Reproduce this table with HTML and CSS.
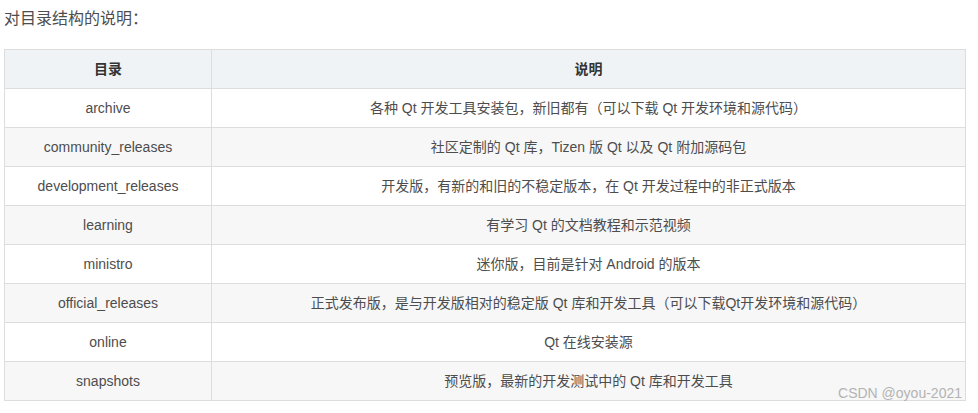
FILE: index.html
```html
<!DOCTYPE html>
<html lang="zh">
<head>
<meta charset="utf-8">
<link rel="stylesheet" href="styles.css">
</head>
<body>
<div class="page">
  <p class="title">对目录结构的说明：</p>
  <div class="table-wrap">
    <table class="dirs">
      <thead>
        <tr><th class="c1">目录</th><th>说明</th></tr>
      </thead>
      <tbody>
        <tr><td>archive</td><td>各种 Qt 开发工具安装包，新旧都有（可以下载 Qt 开发环境和源代码）</td></tr>
        <tr><td>community_releases</td><td>社区定制的 Qt 库，Tizen 版 Qt 以及 Qt 附加源码包</td></tr>
        <tr><td>development_releases</td><td>开发版，有新的和旧的不稳定版本，在 Qt 开发过程中的非正式版本</td></tr>
        <tr><td>learning</td><td>有学习 Qt 的文档教程和示范视频</td></tr>
        <tr><td>ministro</td><td>迷你版，目前是针对 Android 的版本</td></tr>
        <tr><td>official_releases</td><td>正式发布版，是与开发版相对的稳定版 Qt 库和开发工具（可以下载Qt开发环境和源代码）</td></tr>
        <tr><td>online</td><td>Qt 在线安装源</td></tr>
        <tr><td>snapshots</td><td>预览版，最新的开发测试中的 Qt 库和开发工具</td></tr>
      </tbody>
    </table>
    <span class="watermark">CSDN @oyou-2021</span>
  </div>
</div>
</body>
</html>
```

FILE: styles.css
```css
html, body {
  margin: 0;
  padding: 0;
  background: #fff;
}
body {
  font-family: "Liberation Sans", "Noto Sans CJK SC", sans-serif;
  color: #4d4d4d;
}
.page {
  padding: 6px 12px 0 4px;
}
.title {
  margin: 0 0 17px 0;
  font-size: 16px;
  line-height: 26px;
  color: #4d4d4d;
}
.table-wrap {
  position: relative;
  width: 962px;
}
.dirs {
  width: 962px;
  border-collapse: collapse;
  table-layout: fixed;
  font-size: 14px;
}
.dirs th, .dirs td {
  border: 1px solid #ddd;
  padding: 8px 8px;
  line-height: 22px;
  text-align: center;
  white-space: nowrap;
}
.dirs .c1 {
  width: 190px;
}
.dirs th {
  background: #eff3f5;
  font-weight: bold;
  color: #333;
}
.dirs tbody tr:nth-child(even) td {
  background: #f7f7f7;
}
.watermark {
  position: absolute;
  right: 4px;
  bottom: 0;
  font-size: 14px;
  line-height: 16px;
  color: #b3b3b3;
}
```
